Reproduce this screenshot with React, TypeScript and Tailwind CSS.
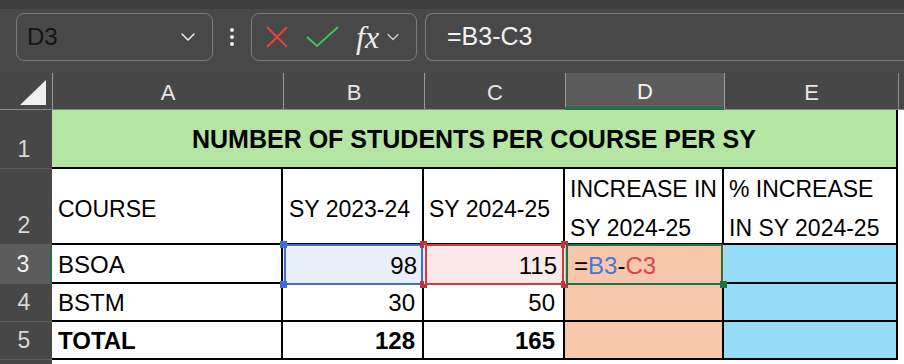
import { ChevronDown } from 'lucide-react';

const COLS = ['A', 'B', 'C', 'D', 'E'];

const Handle = ({ className }: { className: string }) => (
  <span className={`absolute h-[7px] w-[7px] ${className}`} />
);

const RowHead = ({ n, active, bottom }: { n: number; active?: boolean; bottom?: boolean }) => (
  <div
    className={`flex justify-center border-b border-[#5f5f5f] pr-1 text-[23px] ${
      bottom ? 'items-end pb-[2px]' : 'items-center'
    } ${active ? 'border-r-2 border-r-[#1e7145] bg-[#5c5c5c] text-[#f2f2f2]' : 'bg-[#474747] text-[#d8d8d8]'}`}
  >
    {n}
  </div>
);

export default function App() {
  return (
    <div className="h-[364px] w-[904px] overflow-hidden bg-[#474747] font-['Liberation_Sans',Arial,sans-serif]">
      {/* formula bar */}
      <div className="h-[73px] border-t-[9px] border-[#3d3d3d] bg-[#484848]">
        <div className="flex items-center pt-[4px]">
          <div className="ml-[16px] flex h-[48px] w-[197px] items-center justify-between rounded-lg border border-[#7c7c7c] pl-[10px] pr-[12px]">
            <span className="text-[24px] text-[#141414]">D3</span>
            <ChevronDown className="h-6 w-6 text-[#e8e8e8]" strokeWidth={1.6} />
          </div>
          <div className="mx-[17px] flex flex-col gap-[3px]">
            <span className="h-[4px] w-[4px] rounded-full bg-[#e8e8e8]" />
            <span className="h-[4px] w-[4px] rounded-full bg-[#e8e8e8]" />
            <span className="h-[4px] w-[4px] rounded-full bg-[#e8e8e8]" />
          </div>
          <div className="flex h-[48px] w-[166px] items-center rounded-lg border border-[#7c7c7c] pl-[12px]">
            <svg width="26" height="26" viewBox="0 0 26 26" className="text-[#e8413c]">
              <path d="M3 3 L23 23 M23 3 L3 23" stroke="currentColor" strokeWidth="2" fill="none" />
            </svg>
            <svg width="34" height="26" viewBox="0 0 34 26" className="ml-[16px] text-[#3ec45a]">
              <path d="M1 13 L11 22 L32 3" stroke="currentColor" strokeWidth="2" fill="none" />
            </svg>
            <span className="ml-[16px] font-['Liberation_Serif',serif] text-[32px] italic leading-none text-[#ececec]">fx</span>
            <ChevronDown className="ml-[4px] h-5 w-5 text-[#cfcfcf]" strokeWidth={1.6} />
          </div>
          <div className="ml-[8px] flex h-[48px] flex-1 items-center rounded-l-lg border border-r-0 border-[#7c7c7c] pl-[21px]">
            <span className="text-[25px] text-[#f2f2f2]">=B3-C3</span>
          </div>
        </div>
      </div>

      {/* sheet grid */}
      <div className="grid grid-cols-[52px_231px_141px_141px_159px_174px_1fr] grid-rows-[37px_59px_76px_39px_38px_38px_1fr]">
        {/* column headers */}
        <div className="flex items-end justify-end border-b border-[#8a8a8a] pb-[4px] pr-[6px]">
          <svg width="26" height="25" viewBox="0 0 26 25">
            <path d="M26 0 L26 25 L0 25 Z" fill="#f0f0f0" />
          </svg>
        </div>
        {COLS.map((c) => (
          <div
            key={c}
            className={`flex items-center justify-center border-b border-[#8a8a8a] text-[22px] ${
              c === 'D' ? 'border-b-[3px] border-b-[#1e7145] bg-[#5c5c5c] text-[#f4f4f4]' : 'bg-[#474747] text-[#e6e6e6]'
            }`}
          >
            <div className="flex h-full w-full items-center justify-center border-l border-[#9a9a9a] pt-[2px]">{c}</div>
          </div>
        ))}
        <div className="border-b border-l border-[#8a8a8a] bg-[#474747]" />

        {/* row 1 */}
        <RowHead n={1} bottom />
        <div className="col-span-5 flex items-center justify-center border-b-2 border-r-2 border-black bg-[#b4e5a2] pt-[2px] text-[25px] font-bold text-black">
          NUMBER OF STUDENTS PER COURSE PER SY
        </div>
        <div className="bg-white" />

        {/* row 2 */}
        <RowHead n={2} bottom />
        <div className="flex items-center border-b-2 border-r-2 border-black bg-white pl-[6px] pt-[6px] text-[23px] text-black">COURSE</div>
        <div className="flex items-center border-b-2 border-r-2 border-black bg-white pl-[6px] pt-[6px] text-[23px] text-black">SY 2023-24</div>
        <div className="flex items-center border-b-2 border-r-2 border-black bg-white pl-[5px] pt-[6px] text-[23px] text-black">SY 2024-25</div>
        <div className="flex flex-col justify-center border-b-2 border-r-2 border-black bg-white pl-[5px] pt-[6px] text-[23px] leading-[39px] text-black">
          <span>INCREASE IN</span>
          <span>SY 2024-25</span>
        </div>
        <div className="flex flex-col justify-center border-b-2 border-r-2 border-black bg-white pl-[5px] pt-[6px] text-[23px] leading-[39px] text-black">
          <span>% INCREASE</span>
          <span>IN SY 2024-25</span>
        </div>
        <div className="bg-white" />

        {/* row 3 */}
        <RowHead n={3} active />
        <div className="flex items-center border-b-2 border-r-2 border-black bg-white pl-[6px] pt-[2px] text-[24px] text-black">BSOA</div>
        <div className="relative flex items-center justify-end bg-[#e9eef9] pr-[7px] pt-[2px] text-[24px] text-black">
          98
          <div className="pointer-events-none absolute inset-x-[1px] -top-[1px] -bottom-[1px] border-2 border-[#3b6fd6]" />
          <Handle className="-left-[3px] -top-[4px] bg-[#3b6fd6]" />
          <Handle className="-left-[3px] -bottom-[4px] bg-[#3b6fd6]" />
          <Handle className="-right-[3px] -top-[4px] bg-[#c4323a]" />
          <Handle className="-right-[3px] -bottom-[4px] bg-[#c4323a]" />
        </div>
        <div className="relative flex items-center justify-end bg-[#fbe9e9] pr-[8px] pt-[2px] text-[24px] text-black">
          115
          <div className="pointer-events-none absolute inset-x-[1px] -top-[1px] -bottom-[1px] border-2 border-[#d33a41]" />
          <Handle className="-right-[3px] -top-[4px] bg-[#c4323a]" />
          <Handle className="-right-[3px] -bottom-[4px] bg-[#c4323a]" />
        </div>
        <div className="relative flex items-center bg-[#f7c7ac] pl-[9px] pt-[2px] text-[24px] text-black">
          <span>=</span>
          <span className="text-[#4a77d4]">B3</span>
          <span>-</span>
          <span className="text-[#d9434a]">C3</span>
          <div className="pointer-events-none absolute inset-x-[1px] -top-[1px] -bottom-[1px] border-2 border-[#1e7145]" />
          <Handle className="-right-[3px] -bottom-[4px] bg-[#1e7145]" />
        </div>
        <div className="border-b-2 border-r-2 border-black bg-[#94dcf8]" />
        <div className="bg-white" />

        {/* row 4 */}
        <RowHead n={4} />
        <div className="flex items-center border-b-2 border-r-2 border-black bg-white pl-[6px] pt-[2px] text-[24px] text-black">BSTM</div>
        <div className="flex items-center justify-end border-b-2 border-r-2 border-black bg-white pr-[7px] pt-[2px] text-[24px] text-black">30</div>
        <div className="flex items-center justify-end border-b-2 border-r-2 border-black bg-white pr-[8px] pt-[2px] text-[24px] text-black">50</div>
        <div className="border-b-2 border-r-2 border-black bg-[#f7c7ac]" />
        <div className="border-b-2 border-r-2 border-black bg-[#94dcf8]" />
        <div className="bg-white" />

        {/* row 5 */}
        <RowHead n={5} />
        <div className="flex items-center border-b-2 border-r-2 border-black bg-white pl-[6px] pt-[2px] text-[24px] font-bold text-black">TOTAL</div>
        <div className="flex items-center justify-end border-b-2 border-r-2 border-black bg-white pr-[7px] pt-[2px] text-[24px] font-bold text-black">128</div>
        <div className="flex items-center justify-end border-b-2 border-r-2 border-black bg-white pr-[8px] pt-[2px] text-[24px] font-bold text-black">165</div>
        <div className="border-b-2 border-r-2 border-black bg-[#f7c7ac]" />
        <div className="border-b-2 border-r-2 border-black bg-[#94dcf8]" />
        <div className="bg-white" />

        {/* row 6 peek */}
        <div className="h-[10px] bg-[#474747]" />
        <div className="col-span-6 h-[10px] bg-white" />
      </div>
    </div>
  );
}
